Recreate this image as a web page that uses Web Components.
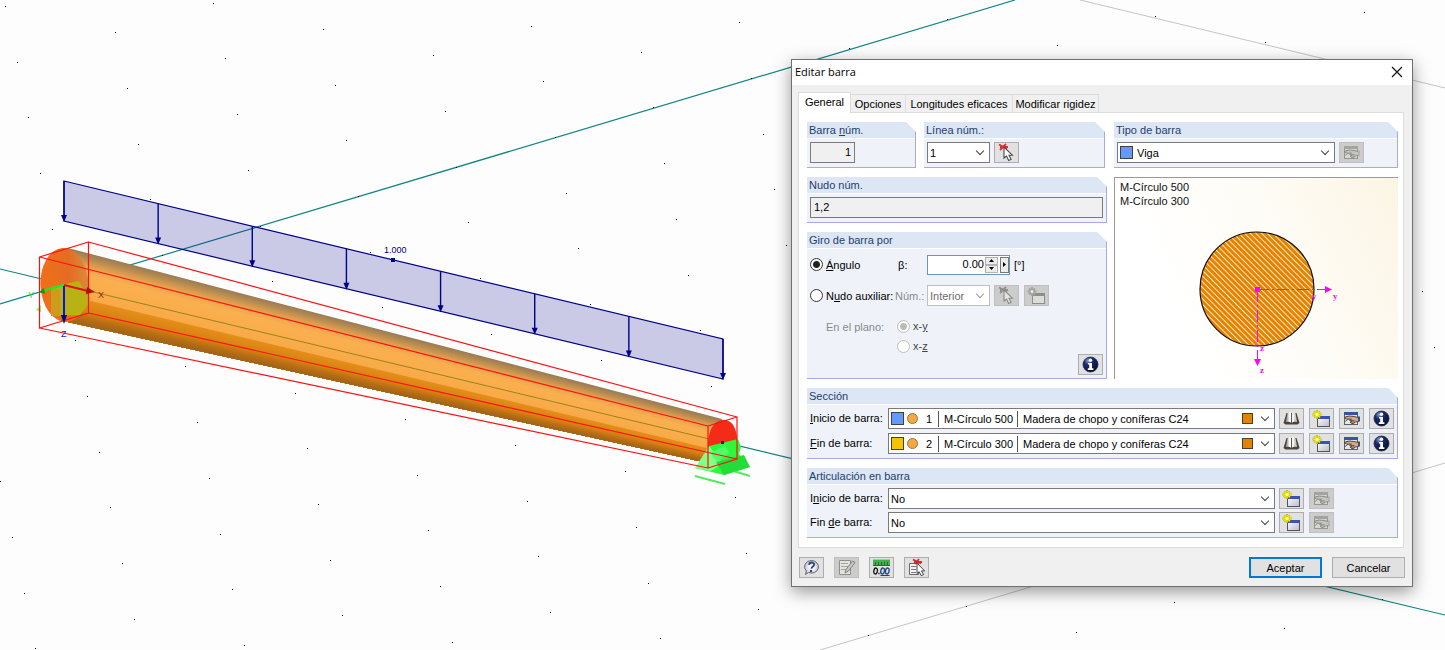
<!DOCTYPE html>
<html lang="es">
<head>
<meta charset="utf-8">
<title>Editar barra</title>
<style>
  html, body { margin: 0; height: 100%; }
  body { font: 11px/14px "Liberation Sans", Arial, sans-serif; color: #000; background: #fdfdfd; }
</style>
</head>
<body>
<app-desktop>
  <model-view></model-view>
  <member-dialog slot="window"></member-dialog>
</app-desktop>

<script>
const WINDOW_SPARK = (dim) => {
  const bar = dim ? '#8e8e8a' : '#3a52b0', line = dim ? '#8c8c88' : '#50545c', fill = dim ? '#dcdcd8' : 'url(#wg)', star = dim ? '#a5a5a0' : '#f4ea00', core = dim ? '#e8e8e4' : '#fffbb0';
  return `<defs><linearGradient id="wg" x1="0" y1="0" x2="1" y2="1"><stop offset="0" stop-color="#fff"/><stop offset="1" stop-color="#b9bcc4"/></linearGradient></defs>
  <rect x="4.5" y="6.5" width="12" height="10" fill="${fill}" stroke="${line}"/><rect x="4" y="6" width="13" height="3" fill="${bar}"/>
  <path d="M4 0v9M-.5 4.500h9M1 1.500l6 6M7 1.500l-6 6" stroke="${dim ? star : '#a8a43c'}" stroke-width="1.800"/><path d="M4 .5v8M0 4.500h8M1.200 1.700l5.600 5.600M6.800 1.700l-5.600 5.600" stroke="${star}" stroke-width="1.300"/><circle cx="4" cy="4.500" r="1.500" fill="${core}"/>`;
};
const WINDOW_HAND = (dim) => {
  const bar = dim ? '#a3a3a0' : '#3a52a0', line = dim ? '#969692' : '#5c606a', hand = dim ? '#c4c4be' : '#d3a98a', edge = dim ? '#878782' : '#4c3a30';
  return `<rect x="1.500" y="2.500" width="13" height="12" fill="${dim ? '#d6d6d2' : '#e4e6ea'}" stroke="${line}"/><rect x="1" y="2" width="14" height="3" fill="${bar}"/>
  <path d="M2 11.500l4-3M3 6.500h4" stroke="${line}"/><path d="M1 7.500l5-1.500 5 .5 4.500 1v4l-3 .5-2 1.500H8.500L7 12l2-.6-2.500-1.200 2-1L3.500 9z" fill="${hand}" stroke="${edge}" stroke-width=".9"/><path d="M15 6.500h2v5h-2z" fill="${dim ? '#b4b4b0' : '#40507a'}"/><path d="M8 12h4M8.500 10.500h3" stroke="${edge}" stroke-width=".7"/>`;
};
const PICK = (dim) => `<path d="M1 .5l8 4M8 0L2 6M2 3h8" stroke="${dim ? '#8f8f8b' : '#e23030'}" stroke-width="1.800"/><path d="M6 3v11l2.500-2 2.200 4.500 2.400-1.200-2.100-4.100h3.400z" fill="${dim ? '#e4e4e0' : '#fff'}" stroke="${dim ? '#8a8a86' : '#4a4a4a'}" stroke-width="1.100"/>`;

const ICONS = {
  pick: PICK(false),
  pickDim: PICK(true),
  spark: WINDOW_SPARK(false),
  sparkDim: WINDOW_SPARK(true),
  hand: WINDOW_HAND(false),
  handDim: WINDOW_HAND(true),
  info: `<defs><radialGradient id="ig" cx=".35" cy=".25" r=".8"><stop offset="0" stop-color="#8fa0d8"/><stop offset=".35" stop-color="#1c2c6c"/><stop offset="1" stop-color="#060c28"/></radialGradient></defs>
    <circle cx="8.500" cy="8.500" r="7.500" fill="url(#ig)" stroke="#1a2350" stroke-width=".8"/><circle cx="8.500" cy="4.200" r="1.700" fill="#fff"/><path d="M6 7h4v5.200h1.400V14H5.800v-1.800h1.400V8.600H6z" fill="#fff"/>`,
  book: `<path d="M.5 13L3.500 3h10L16.500 13l-2 1.500h-12z" fill="#4a443e"/><path d="M3 12L4.500 3C5.500 1.500 7.500 1.500 8.500 3v10C7 11.500 5 11.500 3 12z" fill="#b8b3ac"/><path d="M5.500 11.500V2.500C6.500 1.700 7.800 2 8.500 3v10c-1-1-2-1.400-3-1.500z" fill="#fff"/><path d="M8.500 13V3C9.500 1.500 11.500 1.500 12.500 3L14 12c-2-.6-4-.5-5.500 1z" fill="#d0ccc6"/><path d="M8.500 13V3c.7-1 1.700-1.300 2.700-.8v9.400c-1 .1-2 .6-2.700 1.400z" fill="#f4f4f2"/><path d="M8.500 3v10" stroke="#5c5650"/>`,
  help: `<defs><radialGradient id="hg"><stop offset=".3" stop-color="#fff"/><stop offset="1" stop-color="#b9bec8"/></radialGradient></defs>
    <path d="M8.500 1.500a7 6.300 0 1 1-3 12L2.500 15.500l.8-3.500A7 6.300 0 0 1 8.500 1.500z" fill="url(#hg)" stroke="#666b76"/><path d="M6 5.800C6.500 3.800 8 3.400 9.300 3.600c1.900.4 2.200 2 1.200 3.200C9.500 7.900 8.700 8.200 8.400 9.600" fill="none" stroke="#2c4186" stroke-width="1.900"/><circle cx="8" cy="12" r="1.200" fill="#2c4186"/>`,
  note: `<path d="M1.500 1.500h11v14h-11z" fill="#e2e2de" stroke="#8f8f8b"/><path d="M3 4.500h7M3 7.500h7M3 10.500h5" stroke="#a4a4a0"/><path d="M7 14l1-3.500L14.500 2 17 3.500 10.500 12z" fill="#c9c9c4" stroke="#80807c"/>`,
  units: `<path d="M0 0h17v6H0z" fill="#43b04c"/><path d="M0 .5h17" stroke="#8bdc8f"/><path d="M2.500 3v3M5.500 3v3M8.500 3v3M11.500 3v3M14.500 3v3" stroke="#1e6e28"/><path d="M0 6.500h17" stroke="#2c6a34"/>
    <g fill="none" stroke-width="1.300"><ellipse cx="2.600" cy="12" rx="1.800" ry="3" stroke="#111" transform="rotate(12 2.600 12)"/><path d="M5.300 14.500h1.200" stroke="#111"/><ellipse cx="9.600" cy="12" rx="1.800" ry="3" stroke="#27437e" transform="rotate(12 9.600 12)"/><ellipse cx="14.300" cy="12" rx="1.800" ry="3" stroke="#27437e" transform="rotate(12 14.300 12)"/><path d="M7.500 16.500h9" stroke="#27437e" stroke-width="1"/></g>`,
  pickList: `<path d="M1.500 4.500h9v11h-9z" fill="#f4f4f4" stroke="#666"/><path d="M3 7.500h5M3 10.500h5M3 13.500h5" stroke="#777"/><path d="M5 .5l8 4M11 0L7 5M6 3h8" stroke="#d42a2a" stroke-width="1.800"/><path d="M9 4v10.500l2.200-1.800 2 3.900 2.400-1-2.200-3.700h3.200z" fill="#fff" stroke="#444"/>`,
};

const define = (name, html, setup) => {
  const template = document.createElement('template');
  template.innerHTML = html;
  customElements.define(name, class extends HTMLElement {
    constructor() {
      super();
      this.attachShadow({ mode: 'open' }).append(template.content.cloneNode(true));
    }
    connectedCallback() { if (setup) setup.call(this, this.shadowRoot); }
  });
};

const CONTROLS = `
  * { box-sizing: border-box; }
  input, select, button { font: inherit; color: inherit; margin: 0; border-radius: 0; outline: none; }
  .text { height: 21px; padding: 0 3px 1px; border: 1px solid #7a7a7a; background: #f0f0f0; }
  .combo { position: relative; display: flex; align-items: center; height: 21px; border: 1px solid #7a7a7a; background: #fff; }
  .combo select { appearance: none; flex: 1; min-width: 0; height: 19px; padding: 0 20px 0 2px; border: 0; background: none; }
  .combo::after { content: ""; position: absolute; right: 6px; top: 5px; width: 6px; height: 6px; box-sizing: border-box; border: solid #444; border-width: 0 1px 1px 0; transform: rotate(45deg); pointer-events: none; }
  .combo.off { border-color: #bfbfbf; color: #777; }
  .combo.off::after { border-color: #a0a0a0; }
  .combo select:disabled { opacity: 1; color: #6d6d6d; }
  .swatch { width: 13px; height: 13px; margin-left: 2px; border: 1px solid #404040; background: var(--swatch); flex: none; }
`;

define('app-desktop', `
  <style>
    :host { display: block; position: relative; min-height: 100vh; overflow: hidden; }
    ::slotted([slot=window]) { position: absolute; top: 59px; right: 32px; }
  </style>
  <slot></slot><slot name="window"></slot>`);

define('icon-button', `
  <style>
    :host { display: block; flex: none; }
    button { display: grid; place-items: center; width: 25px; height: 21px; padding: 0; border: 1px solid #adadad; background: #e1e1e1; }
    button:disabled { background: #ccc; border-color: #bfbfbf; }
    svg { width: 17px; height: 17px; fill: none; overflow: visible; }
  </style>
  <button type="button"><svg viewBox="0 0 17 17" aria-hidden="true"></svg></button>`,
  function (root) {
    root.querySelector('svg').innerHTML = ICONS[this.getAttribute('icon')];
    const button = root.querySelector('button');
    button.disabled = this.hasAttribute('disabled');
    button.setAttribute('aria-label', this.getAttribute('label'));
  });

define('group-box', `
  <style>
    :host { display: flex; flex-direction: column; box-sizing: border-box; background: #eff3f9; border: solid #a8a8f0; border-width: 0 1px 1px 0; position: relative;
      clip-path: polygon(0 0, calc(100% - 10px) 0, 100% 10px, 100% 100%, 0 100%); }
    header { height: 16px; padding-left: 2px; line-height: 16px; color: #1f3f6b; background: #dce6f4; border-bottom: 1px solid #fff; }
    .body { flex: 1; padding: 3px 3px 4px; }
  </style>
  <header><slot name="title"></slot></header>
  <div class="body"><slot></slot></div>`);

define('combo-row', `
  <style>${CONTROLS}
    :host { display: flex; align-items: center; }
    label { width: 78px; flex: none; padding-bottom: 1px; }
    .combo { width: 387px; }
    .tools { display: flex; gap: 5px; margin-left: 4px; }
  </style>
  <label for="s"></label>
  <div class="combo"><slot name="lead"></slot><select id="s"><option></option></select><slot name="trail"></slot></div>
  <div class="tools"><slot></slot></div>`,
  function (root) {
    root.querySelector('label').innerHTML = this.getAttribute('label').replace(/_(.)/, '<u>$1</u>');
    root.querySelector('option').textContent = this.getAttribute('value');
  });

define('section-lead', `
  <style>${CONTROLS}
    :host { display: flex; align-items: center; height: 19px; }
    .dot { width: 11px; height: 11px; margin-left: 3px; border: 1px solid #8a7a60; border-radius: 50%; background: #f9a63a; }
    .num { width: 20px; padding-left: 8px; }
    .name { width: 80px; padding-left: 5px; margin-right: 3px; line-height: 16px; white-space: nowrap; border: solid #555; border-width: 0 1px; }
  </style>
  <span class="swatch"></span><span class="dot"></span><span class="num"><slot name="num"></slot></span><span class="name"><slot></slot></span>`);

define('section-preview', `
  <style>
    :host { display: block; position: relative; box-sizing: border-box; height: 202px; border: solid #999; border-width: 1px 0 0 1px; color: #111;
      background: linear-gradient(65deg, #fff 25%, #fefcf6 60%, #fbf5e4); }
    .names { padding: 2px 5px; }
    svg { position: absolute; inset: 0; width: 100%; height: 100%; }
    text { font: bold 9px "Liberation Serif", serif; fill: #f0f; }
  </style>
  <div class="names"><div>M-Círculo 500</div><div>M-Círculo 300</div></div>
  <svg viewBox="0 0 283 201" preserveAspectRatio="xMidYMin meet">
    <defs><pattern id="hatch" width="4" height="4" patternUnits="userSpaceOnUse" patternTransform="rotate(-45)"><rect width="4" height="4" fill="#e58300"/><rect width="1" height="4" fill="#ffe6c0"/></pattern></defs>
    <circle cx="142" cy="111" r="57" fill="url(#hatch)" stroke="#111" stroke-width="1.200"/>
    <g fill="#f0f" shape-rendering="crispEdges">
      <path d="M142 111h12v1h-12zM157 111h2v1h-2zM162 111h12v1h-12zM177 111h2v1h-2zM182 111h12v1h-12zM197 111h2v1h-2zM202 111h8v1h-8z"/>
      <path d="M142 112h1v12h-1zM142 127h1v2h-1zM142 132h1v12h-1zM142 147h1v2h-1zM142 152h1v12h-1zM142 167h1v2h-1zM142 172h1v9h-1z"/>
    </g>
    <path d="M140 109h5v5h-5zM210 108l7 3.500-7 3.500zM139 181h7l-3.500 7z" fill="#f0f"/>
    <text x="197" y="121">y</text><text x="218" y="121">y</text><text x="145" y="173">z</text><text x="145" y="195">z</text>
  </svg>`);

define('member-dialog', `
  <style>${CONTROLS}
    :host { display: block; box-sizing: border-box; width: 622px; border: 1px solid #707070; background: #f0f0f0; box-shadow: 0 5px 16px rgba(0,0,0,.4); }
    .title { display: flex; align-items: center; height: 25px; padding: 0 9px 1px 3px; background: #fff; font-family: "Open Sans", sans-serif; }
    .title h1 { flex: 1; margin: 0; font-size: 11px; font-weight: 400; }
    .title button { display: grid; width: 12px; height: 12px; padding: 0; border: 0; background: none; }
    .content { padding: 7px 8px 8px 6px; }
    .tabs { display: flex; align-items: flex-end; }
    .tabs button { height: 18px; padding: 0; border: 1px solid #dcdcdc; border-width: 1px 1px 0 0; background: #f0f0f0; }
    .tabs button[aria-selected=true] { height: 21px; width: 53px; margin-bottom: -1px; padding: 0 0 2px; border-left-width: 1px; background: #fff; }
    .t2 { width: 55px; } .t3 { width: 107px; } .t4 { width: 86px; }
    .page { display: grid; grid-template-columns: 300px 1fr; gap: 9px 7px; padding: 9px 5px 9px 8px; border: 1px solid #dcdcdc; background: #fff; }
    .wide { grid-column: 1 / -1; }
    .pair { display: grid; grid-template-columns: 109px 181px; gap: 8px; }
    .left { display: grid; gap: 9px; grid-template-rows: auto 1fr; }
    .row { display: flex; align-items: center; gap: 4px; }
    .num { width: 45px; text-align: right; }
    .full { display: block; width: 293px; }
    .small { width: 63px; }
    .type { width: 218px; }
    .type select { padding-left: 4px; }
    .rotation { display: grid; grid-template-columns: 85px 32px 1fr; grid-auto-rows: 21px; row-gap: 10px; align-items: center; padding-top: 2px; }
    .rotation .choice, .plane .choice { display: flex; align-items: center; gap: 3px; white-space: nowrap; }
    .plane { grid-column: 2 / -1; display: flex; justify-content: space-between; height: 59px; align-self: start; }
    .plane .choice { height: 20px; margin-left: 2px; color: #444; }
    .plane icon-button { align-self: flex-end; }
    .dim { color: #8a8a8a; }
    .in { padding-left: 16px; }
    .row.tools { gap: 4px; }
    .tools icon-button + icon-button { margin-left: 1px; }
    input[type=radio] { appearance: none; width: 13px; height: 13px; border: 1px solid #333; border-radius: 50%; background: #fff; }
    input[type=radio]:checked { background: radial-gradient(circle, #222 0 3px, #fff 4px); }
    input[type=radio]:disabled { border-color: #bcbcbc; }
    input[type=radio]:disabled:checked { background: radial-gradient(circle, #bbb 0 3px, #fff 4px); }
    .spin { display: flex; width: 83px; height: 20px; border: 1px solid #6f94b5; background: #fff; }
    .spin input { width: 57px; padding: 0 1px 1px; border: 0; text-align: right; background: none; }
    .steps { display: grid; width: 13px; padding: 1px 0; }
    .spin button { display: grid; place-items: center; padding: 0; border: 1px solid #b4b4b4; background: #ececec; }
    .spin .more { width: 9px; margin: 1px 0 1px 2px; border-color: #777; }
    .spin svg { display: block; }
    .orange { --swatch: #e58300; width: 11px; height: 11px; margin-right: 21px; }
    .wide combo-row + combo-row { margin-top: 3px; }
    .sections combo-row + combo-row { margin-top: 4px; }
    .footer { display: flex; align-items: center; gap: 10px; margin: 9px -1px 0 1px; }
    .push { width: 73px; height: 21px; padding: 0; border: 1px solid #adadad; background: #e1e1e1; }
    .push.main { margin-left: auto; border: 2px solid #0078d7; }
  </style>
  <div class="title"><h1>Editar barra</h1>
    <button type="button" aria-label="Cerrar"><svg width="12" height="12"><path d="M1 1l10 10M11 1L1 11" stroke="#111" stroke-width="1.200"/></svg></button></div>
  <div class="content">
    <div class="tabs" role="tablist">
      <button role="tab" aria-selected="true">General</button><button role="tab" class="t2">Opciones</button><button role="tab" class="t3">Longitudes eficaces</button><button role="tab" class="t4">Modificar rigidez</button>
    </div>
    <div class="page">
      <div class="pair">
        <group-box><label slot="title" for="bar">Barra <u>n</u>úm.</label><input class="text num" id="bar" value="1" readonly></group-box>
        <group-box><label slot="title" for="line">Línea núm.:</label>
          <div class="row"><div class="combo small"><select id="line"><option>1</option></select></div><icon-button icon="pick" label="Seleccionar línea"></icon-button></div></group-box>
      </div>
      <group-box><label slot="title" for="type">Tipo de barra</label>
        <div class="row"><div class="combo type"><span class="swatch" style="--swatch:#6699ff"></span><select id="type"><option>Viga</option></select></div><icon-button icon="handDim" label="Editar tipo" disabled></icon-button></div></group-box>
      <div class="left">
        <group-box><label slot="title" for="nodes">Nudo núm.</label><input class="text full" id="nodes" value="1,2" readonly></group-box>
        <group-box><span slot="title">Giro de barra por</span>
          <div class="rotation">
            <div class="choice"><input type="radio" name="rot" id="angle" checked><label for="angle"><u>Á</u>ngulo</label></div>
            <label class="beta" for="beta">&nbsp;β:</label>
            <div class="row"><div class="spin"><input id="beta" value="0.00">
              <div class="steps"><button type="button" aria-label="Aumentar"><svg width="5" height="3"><path d="M0 3h5L2.500 0z"/></svg></button><button type="button" aria-label="Reducir"><svg width="5" height="3"><path d="M0 0h5L2.500 3z"/></svg></button></div>
              <button type="button" class="more" aria-label="Valores"><svg width="3" height="5"><path d="M0 0v5l3-2.500z"/></svg></button></div><span>[°]</span></div>
            <div class="choice"><input type="radio" name="rot" id="aux"><label for="aux">N<u>u</u>do auxiliar:</label></div>
            <label class="dim" for="auxnum">Núm.:</label>
            <div class="row tools"><div class="combo off small"><select id="auxnum" disabled><option>Interior</option></select></div><icon-button icon="pickDim" label="Seleccionar nudo" disabled></icon-button><icon-button icon="sparkDim" label="Nuevo nudo" disabled></icon-button></div>
            <span class="dim in">En el plano:</span>
            <div class="plane">
              <div><div class="choice"><input type="radio" name="plane" id="xy" checked disabled><label for="xy">x-<u>y</u></label></div>
              <div class="choice"><input type="radio" name="plane" id="xz" disabled><label for="xz">x-<u>z</u></label></div></div>
              <icon-button icon="info" label="Información"></icon-button>
            </div>
          </div></group-box>
      </div>
      <section-preview></section-preview>
      <group-box class="wide sections"><span slot="title">Sección</span>
        <combo-row label="_Inicio de barra:" value="Madera de chopo y coníferas C24">
          <section-lead slot="lead" style="--swatch:#6699ff"><span slot="num">1</span>M-Círculo 500</section-lead><span class="swatch orange" slot="trail"></span>
          <icon-button icon="book" label="Biblioteca"></icon-button><icon-button icon="spark" label="Nueva sección"></icon-button><icon-button icon="hand" label="Editar sección"></icon-button><icon-button icon="info" label="Información"></icon-button></combo-row>
        <combo-row label="_Fin de barra:" value="Madera de chopo y coníferas C24">
          <section-lead slot="lead" style="--swatch:#f5c400"><span slot="num">2</span>M-Círculo 300</section-lead><span class="swatch orange" slot="trail"></span>
          <icon-button icon="book" label="Biblioteca"></icon-button><icon-button icon="spark" label="Nueva sección"></icon-button><icon-button icon="hand" label="Editar sección"></icon-button><icon-button icon="info" label="Información"></icon-button></combo-row>
      </group-box>
      <group-box class="wide"><span slot="title">Articulación en barra</span>
        <combo-row label="I_nicio de barra:" value="No"><icon-button icon="spark" label="Nueva articulación"></icon-button><icon-button icon="handDim" label="Editar articulación" disabled></icon-button></combo-row>
        <combo-row label="Fin _de barra:" value="No"><icon-button icon="spark" label="Nueva articulación"></icon-button><icon-button icon="handDim" label="Editar articulación" disabled></icon-button></combo-row>
      </group-box>
    </div>
    <div class="footer">
      <icon-button icon="help" label="Ayuda"></icon-button><icon-button icon="note" label="Comentario" disabled></icon-button><icon-button icon="units" label="Unidades"></icon-button><icon-button icon="pickList" label="Seleccionar"></icon-button>
      <button type="button" class="push main">Aceptar</button><button type="button" class="push">Cancelar</button>
    </div>
  </div>`);

define('model-view', `
  <style>
    :host { display: block; height: 100vh; }
    svg { display: block; width: 100%; height: 100%; }
    text { font: 9px "Liberation Sans", sans-serif; }
  </style>
  <svg viewBox="0 0 1445 650" preserveAspectRatio="xMinYMin slice" fill="none">
    <defs>
      <linearGradient id="cap"><stop offset="0" stop-color="#f07018"/><stop offset=".6" stop-color="#e46c22"/><stop offset="1" stop-color="#d98a3a"/></linearGradient>
    </defs>
    <path d="M1080 0L1445 88M820 650L1445 463" stroke="#c4c4c4"/>
    <path d="M0 304L1015 0M0 269L1445 615" stroke="#108484" stroke-width="1.200"/>
    <g id="dots" fill="#000" shape-rendering="crispEdges"></g>
    <path d="M64 181L723 339V379L64 221z" fill="#000090" fill-opacity=".2" stroke="#000088" stroke-width="1.200"/>
    <g id="arrows" stroke="#000088" stroke-width="1.400" fill="#000088"></g>
    <path d="M391 258h4v4h-4z" fill="#000088"/><text x="384" y="253" fill="#000088">1.000</text>
    <g id="beam"></g>
    <ellipse cx="64.500" cy="285" rx="24" ry="37" fill="url(#cap)" transform="rotate(-3 64.500 285)"/>
    <path d="M51 287L79 281 88 297V305L80 315 51 316z" fill="#b8b214"/><path d="M51 287L60 290V316H51z" fill="#cf9b1c"/>
    <path d="M36 310l5-5v7z" fill="#70ff70"/>
    <path d="M64 285L722 442" stroke="#9a8418"/>
    <path d="M708 463V446C708 430 714 420 724 420S737 432 737 440V459z" fill="#f22c16"/>
    <path d="M695 476l30 8M730 470l20 6" stroke="#55ea60" stroke-width="2"/>
    <path d="M709 446L738 439 741 447 739 454 750 467 724 475 695 468 708 458z" fill="#2cf83c"/>
    <path d="M695 468L709 446 723 463 711 471z" fill="#84ff84"/><path d="M716 462L744 455 750 467 724 475z" fill="#22dc38"/><path d="M711 453l14-8 4 8-12 9z" fill="#4cff66"/>
    <path d="M721 441h3v3h-3z" fill="#5a1010"/>
    <path d="M39.500 257L88.500 242V313L39.500 328zM708 426L737 417V459L708 468zM39.500 257L708 426M88.500 242L737 417M88.500 313L737 459M39.500 328L708 468" stroke="#ff1010" stroke-width="1.200"/>
    <path d="M64 285L88 291" stroke="#e01010" stroke-width="2"/><path d="M87 287l8 5-9 2z" fill="#b01010"/>
    <path d="M64 285L42 291" stroke="#10f020" stroke-width="2"/><path d="M39 292l5-4 1 6z" fill="#0a9a18"/>
    <path d="M64 286V316" stroke="#1010f0" stroke-width="2"/><path d="M61 315h6l-3 9z" fill="#000090"/>
    <text x="98" y="298" fill="#a81818">X</text><text x="28" y="298" fill="#18e018">Y</text><text x="61" y="337" fill="#1818f0">Z</text>
  </svg>`,
  function (root) {
    // The working-plane grid in axonometric projection.
    let dots = '';
    for (let i = -2; i < 15; i++) for (let j = -8; j < 14; j++) {
      const x = Math.round(5 + 109.9 * i + 11.7 * j), y = Math.round(6 + 26.2 * i + 55.7 * j);
      if (x >= 0 && x < 1445 && y >= 0 && y < 650) dots += `<rect x="${x}" y="${y}" width="1" height="1"/>`;
    }
    root.getElementById('dots').innerHTML = dots;

    let arrows = '';
    for (let k = 0; k < 8; k++) {
      const x = 64 + k * 659 / 7, y = 181 + k * 158 / 7;
      arrows += `<path d="M${x} ${y}v38"/><path stroke="none" d="M${x - 3} ${y + 34}h6l-3 7z"/>`;
    }
    root.getElementById('arrows').innerHTML = arrows;

    // Shading across the tapered member: each layer reaches to the lower edge and the next one covers it.
    const stops = [[0, 152, 122, 84], [.08, 178, 137, 82], [.2, 226, 160, 78], [.32, 250, 176, 80], [.67, 249, 170, 72], [.671, 228, 143, 28], [.82, 217, 130, 20], [.92, 184, 110, 20], [1, 158, 100, 28]];
    const shade = (t) => {
      const n = Math.max(1, stops.findIndex((s) => s[0] >= t)), a = stops[n - 1], b = stops[n], f = (t - a[0]) / (b[0] - a[0]);
      return `rgb(${[1, 2, 3].map((c) => Math.round(a[c] + (b[c] - a[c]) * f))})`;
    };
    const N = 60;
    let beam = '';
    for (let k = 0; k < N; k++) {
      const t = k / N, left = 68 + 8 * Math.sqrt(1 - (2 * t - 1) ** 2), right = 722 - 14 * Math.min(1, t * 2);
      beam += `<path fill="${shade((k + .5) / N)}" d="M${left} ${248 + 74 * t}L${right} ${419 + 44 * t}L708 463L68 322z"/>`;
    }
    root.getElementById('beam').innerHTML = beam;
  });
</script>
</body>
</html>
